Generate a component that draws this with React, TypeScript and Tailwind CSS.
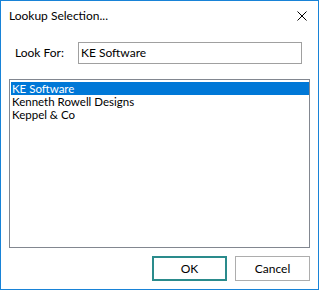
import React from "react";

const items = ["KE Software", "Kenneth Rowell Designs", "Keppel & Co"];

function App() {
  return (
    <div
      className="w-[319px] h-[290px] border border-[#1883d7] bg-white flex flex-col text-[12px] text-black"
      style={{ fontFamily: 'Lato, "Liberation Sans", Arial, sans-serif' }}>
      <div className="h-[30px] flex items-center justify-between pl-[8px] pr-[11px]">
        <span className="leading-none">Lookup Selection...</span>
        <svg width="10" height="10" viewBox="0 0 10 10" className="block">
          <path d="M0.5 0.5 L9.5 9.5 M9.5 0.5 L0.5 9.5" stroke="#000" strokeWidth="1" />
        </svg>
      </div>

      <div className="mt-[11px] flex items-center h-[22px]">
        <span className="pl-[14px] w-[77px] leading-none">Look For:</span>
        <div className="w-[224px] h-[22px] border border-[#a0a0a0] flex items-center pl-[2px]">
          KE Software
        </div>
      </div>

      <div className="mt-[15px] ml-[8px] w-[301px] h-[169px] border border-[#828790] pl-[1px] pt-[2px] flex flex-col">
        {items.map((item, i) => (
          <div
            key={item}
            className={
              i === 0
                ? "h-[13px] pl-[1px] bg-[#0078d7] text-white text-[11.5px] leading-[13px]"
                : "h-[13px] pl-[1px] text-[11.5px] leading-[13px]"
            }>
            {item}
          </div>
        ))}
      </div>

      <div className="mt-[8px] flex justify-end gap-[8px] pr-[8px]">
        <button className="w-[75px] h-[25px] border-2 border-[#2a8b8c] bg-white leading-none">
          OK
        </button>
        <button className="w-[75px] h-[25px] border border-[#adadad] bg-white leading-none">
          Cancel
        </button>
      </div>
    </div>
  );
}

export default App;
